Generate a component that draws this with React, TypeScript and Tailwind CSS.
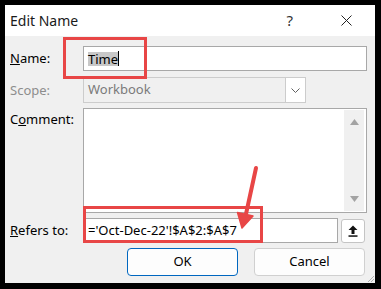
import React from "react";

const font = { fontFamily: '"Noto Sans", "Open Sans", sans-serif' };

function Label({ children, muted }: { children: React.ReactNode; muted?: boolean }) {
  return (
    <div className={`w-[73px] shrink-0 text-[13px] leading-none ${muted ? "text-[#8d8d8d]" : "text-black"}`}>
      {children}
    </div>
  );
}

export default function App() {
  return (
    <div className="relative h-[289px] w-[381px] bg-black pt-[5px] pl-[5px]" style={font}>
      <div className="flex h-[278px] w-[370px] flex-col bg-[#f0f0f0]">
        {/* Title bar */}
        <div className="flex h-[31px] items-center bg-white pl-[5px]">
          <span className="flex-1 text-[14px] text-[#1a1a1a]">Edit Name</span>
          <span className="mr-[48px] text-[15px] text-[#333]">?</span>
          <svg width="11" height="11" viewBox="0 0 11 11" className="mr-[23px]">
            <path d="M0.5 0.5 L10.5 10.5 M10.5 0.5 L0.5 10.5" stroke="#222" strokeWidth="1" />
          </svg>
        </div>

        <div className="flex flex-1 flex-col gap-[5px] pt-[10px] pl-[5px]">
          {/* Name */}
          <div className="flex items-center">
            <Label>
              <span className="underline">N</span>ame:
            </Label>
            <div className="flex h-[25px] w-[284px] items-center border border-[#a8a8a8] bg-white pl-[4px]">
              <span className="bg-[#c8c8c8] text-[13px] leading-[14px] text-black">Time</span>
              <span className="h-[15px] w-px bg-black" />
            </div>
          </div>

          {/* Scope */}
          <div className="mt-px flex items-center">
            <Label muted>Scope:</Label>
            <div className="flex h-[26px] w-[223px] items-stretch border border-[#cccccc] bg-[#f0f0f0]">
              <span className="flex flex-1 items-center pl-[4px] text-[13px] text-[#7a7a7a]">Workbook</span>
              <div className="flex w-[20px] items-center justify-center border-l border-[#cccccc] bg-white">
                <svg width="9" height="5" viewBox="0 0 9 5">
                  <path d="M0.5 0.5 L4.5 4.5 L8.5 0.5" fill="none" stroke="#606060" strokeWidth="1" />
                </svg>
              </div>
            </div>
          </div>

          {/* Comment */}
          <div className="flex items-start">
            <div className="pt-[5px]">
              <Label>
                C<span className="underline">o</span>mment:
              </Label>
            </div>
            <div className="flex h-[105px] w-[284px] justify-end border border-[#a8a8a8] bg-white py-px pr-[2px]">
              <div className="flex w-[20px] flex-col items-center justify-between bg-[#f0f0f0] py-[9px]">
                <svg width="9" height="6" viewBox="0 0 9 6">
                  <path d="M4.5 0 L9 6 L0 6 Z" fill="#a3a3a3" />
                </svg>
                <svg width="9" height="6" viewBox="0 0 9 6">
                  <path d="M0 0 L9 0 L4.5 6 Z" fill="#a3a3a3" />
                </svg>
              </div>
            </div>
          </div>

          {/* Refers to */}
          <div className="flex items-center">
            <Label>
              <span className="underline">R</span>efers to:
            </Label>
            <div className="flex h-[25px] w-[255px] items-center border border-[#a8a8a8] bg-white pl-[4px] text-[13px] text-black">
              ='Oct-Dec-22'!$A$2:$A$7
            </div>
            <div className="ml-[3px] flex h-[24px] w-[24px] items-center justify-center rounded-[3px] border border-[#c4c4c4] bg-white">
              <svg width="10" height="12" viewBox="0 0 10 12">
                <path d="M5 0.5 L9.5 5 L6.5 5 L6.5 9 L3.5 9 L3.5 5 L0.5 5 Z" fill="#111" />
                <rect x="0.5" y="10.3" width="9" height="1.5" fill="#111" />
              </svg>
            </div>
          </div>

          {/* Buttons */}
          <div className="flex justify-end gap-[16px] pr-[10px]">
            <button className="flex h-[28px] w-[111px] items-center justify-center rounded-[4px] border border-[#0067c0] bg-[#fdfdfd] text-[13px] text-black">
              OK
            </button>
            <button className="flex h-[28px] w-[111px] items-center justify-center rounded-[4px] border border-[#d0d0d0] bg-[#fdfdfd] text-[13px] text-black">
              Cancel
            </button>
          </div>
        </div>
      </div>

      {/* Resize grip */}
      <svg className="absolute left-[367px] top-[275px]" width="8" height="8" viewBox="0 0 8 8">
        <path d="M7 1 L1 7 M7 4 L4 7" stroke="#b0b0b0" strokeWidth="1" />
      </svg>

      {/* Annotations */}
      <div className="absolute left-[63px] top-[37px] h-[42px] w-[84px] border-[3px] border-[#e84646]" />
      <div className="absolute left-[83px] top-[206px] h-[37px] w-[180px] border-[3px] border-[#e84646]" />
      <svg className="pointer-events-none absolute left-0 top-0" width="381" height="289" viewBox="0 0 381 289">
        <line x1="256" y1="168" x2="246" y2="214" stroke="#e84646" strokeWidth="4" strokeLinecap="round" />
        <path d="M242 228 L253 216 L237.5 212.5 Z" fill="#e84646" stroke="#e84646" strokeWidth="1.5" strokeLinejoin="round" />
      </svg>
    </div>
  );
}
